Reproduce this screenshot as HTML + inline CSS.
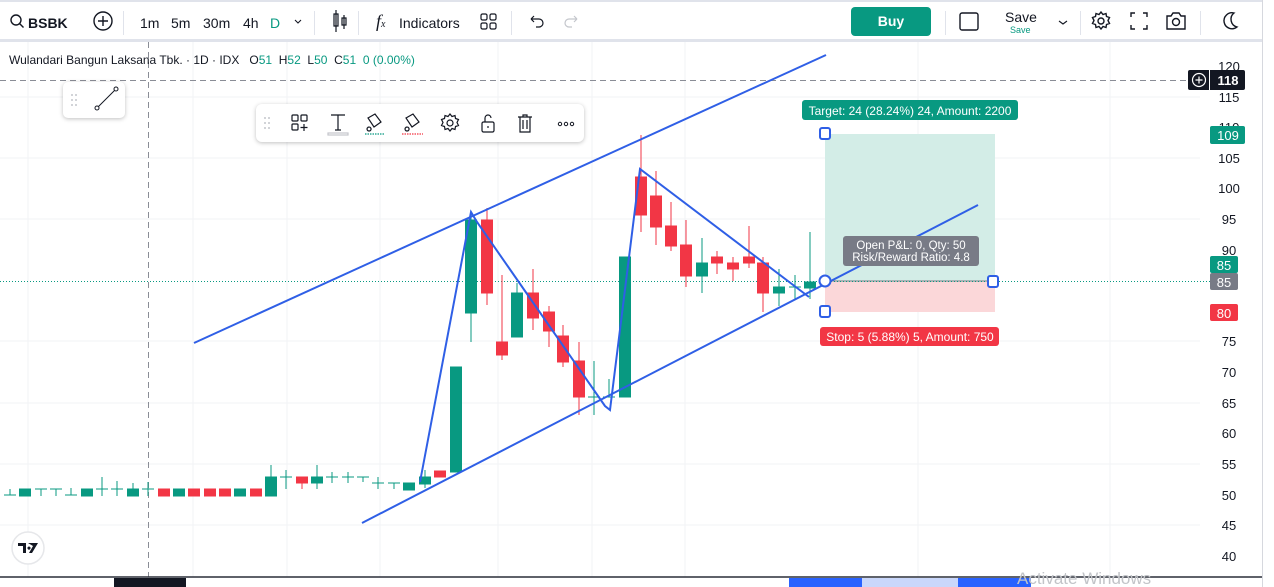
<!DOCTYPE html>
<html><head><meta charset="utf-8">
<style>
*{margin:0;padding:0;box-sizing:border-box}
body{width:1274px;height:587px;overflow:hidden;background:#fff;font-family:"Liberation Sans",sans-serif;color:#131722;position:relative}
.tb{position:absolute;left:0;top:0;width:1262px;height:42px;border-top:2px solid #e0e3eb;border-bottom:3px solid #e0e3eb;background:#fff}
.t{position:absolute;font-size:14px;top:13px}
.sep{position:absolute;top:9px;width:1px;height:24px;background:#e0e3eb}
svg{position:absolute;left:0;top:0}
</style></head><body>
<svg width="1274" height="587" viewBox="0 0 1274 587" font-family="Liberation Sans, sans-serif">
<!-- grid -->
<g stroke="#f2f3f6" stroke-width="1">
<line x1="0" y1="97" x2="1200" y2="97"/><line x1="0" y1="158" x2="1200" y2="158"/><line x1="0" y1="219" x2="1200" y2="219"/><line x1="0" y1="341" x2="1200" y2="341"/><line x1="0" y1="403" x2="1200" y2="403"/><line x1="0" y1="464" x2="1200" y2="464"/><line x1="0" y1="525" x2="1200" y2="525"/>
<line x1="28" y1="42" x2="28" y2="577"/><line x1="193" y1="42" x2="193" y2="577"/><line x1="287" y1="42" x2="287" y2="577"/><line x1="380" y1="42" x2="380" y2="577"/><line x1="498" y1="42" x2="498" y2="577"/><line x1="592" y1="42" x2="592" y2="577"/><line x1="685" y1="42" x2="685" y2="577"/><line x1="918" y1="42" x2="918" y2="577"/><line x1="1110" y1="42" x2="1110" y2="577"/>
</g>
<!-- right border -->
<line x1="1262.5" y1="0" x2="1262.5" y2="587" stroke="#d6d8de"/>
<!-- crosshair -->
<line x1="0" y1="80.5" x2="1188" y2="80.5" stroke="#8a8d96" stroke-dasharray="6,4"/>
<line x1="148.5" y1="42" x2="148.5" y2="577" stroke="#8a8d96" stroke-dasharray="6,4"/>
<!-- position tool -->
<rect x="825" y="134" width="170" height="147" fill="#d3ede7"/>
<rect x="825" y="281" width="170" height="31" fill="#fbd7d9"/>
<line x1="825" y1="281" x2="995" y2="281" stroke="#787b86"/>
<line x1="0" y1="281.5" x2="1210" y2="281.5" stroke="#089981" stroke-dasharray="1,2"/>
<!-- candles early -->
<g fill="#089981" stroke="#089981" stroke-width="1">
<line x1="10" y1="489" x2="10" y2="495"/><line x1="4" y1="495" x2="16" y2="495"/>
<rect x="19.5" y="489" width="11" height="7"/>
<line x1="41" y1="489" x2="41" y2="496"/><line x1="35" y1="489" x2="47" y2="489"/>
<line x1="56" y1="489" x2="56" y2="496"/><line x1="50" y1="489" x2="62" y2="489"/>
<line x1="71" y1="488" x2="71" y2="495"/><line x1="65" y1="495" x2="77" y2="495"/>
<rect x="81.5" y="489" width="11" height="7"/>
<line x1="102" y1="477" x2="102" y2="496"/><line x1="96" y1="489" x2="108" y2="489"/>
<line x1="117" y1="481" x2="117" y2="496"/><line x1="111" y1="489" x2="123" y2="489"/>
<rect x="127.5" y="489" width="11" height="7"/><line x1="133" y1="483" x2="133" y2="489"/>
<line x1="148" y1="482" x2="148" y2="496"/><line x1="142" y1="489" x2="154" y2="489"/>
<rect x="173.5" y="489" width="11" height="7"/>
<rect x="234.5" y="489" width="11" height="7"/>
<rect x="265.5" y="477" width="11" height="19"/><line x1="271" y1="465" x2="271" y2="477"/>
<line x1="286" y1="470" x2="286" y2="489"/><line x1="280" y1="477" x2="292" y2="477"/>
<rect x="311.5" y="477" width="11" height="6"/><line x1="317" y1="465" x2="317" y2="489"/>
<line x1="332" y1="472" x2="332" y2="483"/><line x1="326" y1="477" x2="338" y2="477"/>
<line x1="348" y1="472" x2="348" y2="483"/><line x1="342" y1="477" x2="354" y2="477"/>
<line x1="363" y1="477" x2="363" y2="482"/><line x1="357" y1="477" x2="369" y2="477"/>
<line x1="378" y1="477" x2="378" y2="489"/><line x1="372" y1="483" x2="384" y2="483"/>
<line x1="394" y1="483" x2="394" y2="489"/><line x1="388" y1="483" x2="400" y2="483"/>
<rect x="403.5" y="483" width="11" height="7"/>
<rect x="419.5" y="477" width="11" height="7"/><line x1="425" y1="470" x2="425" y2="488"/>
<rect x="450.5" y="367" width="11" height="105"/>
<rect x="465.5" y="220" width="11" height="93"/><line x1="471" y1="212" x2="471" y2="342"/>
<rect x="511.5" y="293" width="11" height="44"/><line x1="517" y1="283" x2="517" y2="337"/>
<line x1="594" y1="361" x2="594" y2="415"/><line x1="588" y1="397" x2="600" y2="397"/>
<line x1="609" y1="379" x2="609" y2="397"/><line x1="603" y1="397" x2="615" y2="397"/>
<rect x="619.5" y="257" width="11" height="140"/>
<rect x="696.5" y="263" width="11" height="13"/><line x1="702" y1="238" x2="702" y2="293"/>
<rect x="773.5" y="287" width="11" height="6"/><line x1="779" y1="269" x2="779" y2="306"/>
<line x1="795" y1="275" x2="795" y2="300"/><line x1="789" y1="287" x2="801" y2="287"/>
<rect x="804.5" y="282" width="11" height="6"/><line x1="810" y1="232" x2="810" y2="299"/>
</g>
<g fill="#f23645" stroke="#f23645" stroke-width="1">
<rect x="158.5" y="489" width="11" height="7"/>
<rect x="188.5" y="489" width="11" height="7"/>
<rect x="204.5" y="489" width="11" height="7"/>
<rect x="219.5" y="489" width="11" height="7"/>
<rect x="250.5" y="489" width="11" height="7"/>
<rect x="296.5" y="477" width="11" height="6"/><line x1="302" y1="483" x2="302" y2="489"/>
<rect x="434.5" y="471" width="11" height="6"/>
<rect x="481.5" y="220" width="11" height="73"/><line x1="487" y1="208" x2="487" y2="305"/>
<rect x="496.5" y="342" width="11" height="13"/><line x1="502" y1="275" x2="502" y2="360"/>
<rect x="527.5" y="293" width="11" height="25"/><line x1="533" y1="269" x2="533" y2="330"/>
<rect x="543.5" y="312" width="11" height="19"/><line x1="549" y1="306" x2="549" y2="347"/>
<rect x="557.5" y="336" width="11" height="26"/><line x1="563" y1="325" x2="563" y2="367"/>
<rect x="573.5" y="361" width="11" height="36"/><line x1="579" y1="342" x2="579" y2="415"/>
<rect x="635.5" y="177" width="11" height="38"/><line x1="641" y1="135" x2="641" y2="232"/>
<rect x="650.5" y="196" width="11" height="31"/><line x1="656" y1="171" x2="656" y2="245"/>
<rect x="665.5" y="226" width="11" height="20"/><line x1="671" y1="202" x2="671" y2="251"/>
<rect x="680.5" y="245" width="11" height="31"/><line x1="686" y1="220" x2="686" y2="287"/>
<rect x="711.5" y="257" width="11" height="6"/><line x1="717" y1="251" x2="717" y2="274"/>
<rect x="727.5" y="263" width="11" height="6"/><line x1="733" y1="257" x2="733" y2="281"/>
<rect x="743.5" y="257" width="11" height="6"/><line x1="749" y1="226" x2="749" y2="268"/>
<rect x="757.5" y="263" width="11" height="30"/><line x1="763" y1="257" x2="763" y2="312"/>
</g>
<!-- drawings -->
<g stroke="#2f5fe6" stroke-width="2" fill="none">
<line x1="194" y1="343" x2="826" y2="55"/>
<line x1="362" y1="523" x2="978" y2="205"/>
<polyline points="420,482 471,212 477,222 605,406 610,410 640,169 809,297"/>
</g>
<g stroke="#2f5fe6" stroke-width="2" fill="#fff">
<rect x="820" y="128" width="10" height="11" rx="2"/>
<rect x="820" y="306" width="10" height="11" rx="2"/>
<circle cx="825" cy="281" r="5.5"/>
<rect x="988" y="276" width="10" height="11" rx="2"/>
</g>
<!-- labels -->
<rect x="802" y="100" width="216" height="20" rx="3" fill="#089981"/>
<text x="910" y="115" font-size="12" fill="#fff" text-anchor="middle">Target: 24 (28.24%) 24, Amount: 2200</text>
<rect x="843" y="236" width="136" height="30" rx="3" fill="#787b86"/>
<text x="911" y="249" font-size="11.5" fill="#fff" text-anchor="middle">Open P&amp;L: 0, Qty: 50</text>
<text x="911" y="261" font-size="11.5" fill="#fff" text-anchor="middle">Risk/Reward Ratio: 4.8</text>
<rect x="820" y="327" width="179" height="19" rx="3" fill="#f23645"/>
<text x="910" y="341" font-size="12" fill="#fff" text-anchor="middle">Stop: 5 (5.88%) 5, Amount: 750</text>
<!-- price axis -->
<g font-size="13" fill="#131722" text-anchor="middle">
<text x="1229" y="71">120</text><text x="1229" y="102">115</text><text x="1229" y="132">110</text><text x="1229" y="163">105</text><text x="1229" y="193">100</text><text x="1229" y="224">95</text><text x="1229" y="255">90</text><text x="1229" y="346">75</text><text x="1229" y="377">70</text><text x="1229" y="408">65</text><text x="1229" y="438">60</text><text x="1229" y="469">55</text><text x="1229" y="500">50</text><text x="1229" y="530">45</text><text x="1229" y="561">40</text>
</g>
<rect x="1188" y="70" width="57" height="20" rx="2" fill="#131722"/>
<line x1="1209.5" y1="70" x2="1209.5" y2="90" stroke="#fff"/>
<circle cx="1199" cy="80" r="6.5" stroke="#fff" fill="none" stroke-width="1.2"/>
<path d="M1195.5 80h7M1199 76.5v7" stroke="#fff" stroke-width="1.2"/>
<text x="1228" y="85" font-size="13" fill="#fff" text-anchor="middle" font-weight="bold">118</text>
<rect x="1210" y="126" width="35" height="18" rx="2" fill="#089981"/><text x="1228" y="140" font-size="13" fill="#fff" text-anchor="middle">109</text>
<rect x="1210" y="256" width="28" height="17" rx="2" fill="#089981"/><text x="1224" y="270" font-size="13" fill="#fff" text-anchor="middle">85</text>
<rect x="1210" y="273" width="28" height="17" rx="2" fill="#787b86"/><text x="1224" y="287" font-size="13" fill="#fff" text-anchor="middle">85</text>
<rect x="1210" y="304" width="28" height="17" rx="2" fill="#f23645"/><text x="1224" y="318" font-size="13" fill="#fff" text-anchor="middle">80</text>
<!-- time axis -->
<line x1="0" y1="577" x2="1262" y2="577" stroke="#2a2e39" stroke-width="1.5"/>
<rect x="114" y="578" width="72" height="9" fill="#131722"/>
<rect x="789" y="578" width="73" height="9" fill="#2962ff"/>
<rect x="862" y="578" width="96" height="9" fill="#c9d7fb"/>
<rect x="958" y="578" width="73" height="9" fill="#2962ff"/>
<text x="1017" y="584" font-size="17" fill="#c2c4c8">Activate Windows</text>
<!-- TV logo -->
<circle cx="28" cy="548" r="16" fill="#fff" stroke="#e6e7ea" stroke-width="1.5"/>
<path d="M18 543h8v10h-3v-7h-5z M28 543h10l-6 10h-3l4-7z M29 546.5a1.6 1.6 0 1 0 0.01 0" fill="#131722"/>
</svg>
<!-- legend -->
<div style="position:absolute;left:9px;top:53px;font-size:12px;color:#131722;white-space:nowrap">Wulandari Bangun Laksana Tbk. · 1D · IDX &nbsp; O<span style="color:#089981">51</span>&nbsp; H<span style="color:#089981">52</span>&nbsp; L<span style="color:#089981">50</span>&nbsp; C<span style="color:#089981">51</span>&nbsp; <span style="color:#089981">0 (0.00%)</span></div>
<!-- line tool box -->
<div style="position:absolute;left:63px;top:82px;width:62px;height:36px;background:#fff;border-radius:5px;box-shadow:0 1px 4px rgba(0,0,0,.25)">
<svg width="62" height="36"><g fill="#c4c6cc"><circle cx="9" cy="13" r="1"/><circle cx="13" cy="13" r="1"/><circle cx="9" cy="18" r="1"/><circle cx="13" cy="18" r="1"/><circle cx="9" cy="23" r="1"/><circle cx="13" cy="23" r="1"/></g>
<line x1="35" y1="25" x2="52" y2="8" stroke="#131722"/><circle cx="34" cy="26" r="2" fill="#fff" stroke="#131722"/><circle cx="53" cy="7" r="2" fill="#fff" stroke="#131722"/></svg></div>
<!-- floating toolbar -->
<div style="position:absolute;left:256px;top:104px;width:328px;height:38px;background:#fff;border-radius:6px;box-shadow:0 1px 4px rgba(0,0,0,.25)">
<svg width="328" height="38" fill="none" stroke="#131722" stroke-width="1.2">
<g fill="#c4c6cc" stroke="none"><circle cx="9" cy="14" r="1"/><circle cx="13" cy="14" r="1"/><circle cx="9" cy="19" r="1"/><circle cx="13" cy="19" r="1"/><circle cx="9" cy="24" r="1"/><circle cx="13" cy="24" r="1"/></g>
<rect x="36" y="11" width="6" height="6" rx="1"/><rect x="45" y="11" width="6" height="6" rx="1"/><rect x="36" y="20" width="6" height="6" rx="1"/><path d="M48 20v7M44.5 23.5h7"/>
<path d="M75 11h14M82 11v15M79 26h6"/><rect x="72" y="29" width="20" height="2" stroke="#c4c6cc"/>
<path d="M112 14l7-4 6 8-7 5z M113 23a2 2 0 1 0 .1 0"/><path d="M109 30h20" stroke="#089981" stroke-dasharray="1.5,1"/>
<path d="M150 14l7-4 6 8-7 5z M151 23a2 2 0 1 0 .1 0"/><path d="M146 30h21" stroke="#f23645" stroke-dasharray="1.5,1"/>
<circle cx="194" cy="19" r="3"/><path d="M194 10l2 2.5 3-1 .5 3 3 1-1.5 3 1.5 3-3 1-.5 3-3-1-2 2.5-2-2.5-3 1-.5-3-3-1 1.5-3-1.5-3 3-1 .5-3 3 1z"/>
<rect x="226" y="18" width="12" height="10" rx="1.5"/><path d="M229 18v-4a3 3 0 0 1 6 0"/><path d="M232 22v2"/>
<path d="M262 13h14M267 13v-2h4v2M264 13v15h10v-15M267 16v9M271 16v9"/>
<g fill="#131722" stroke="none"><circle cx="304" cy="20" r="2.2"/><circle cx="310" cy="20" r="2.2"/><circle cx="316" cy="20" r="2.2"/></g><g fill="#fff" stroke="none"><circle cx="304" cy="20" r="1.2"/><circle cx="310" cy="20" r="1.2"/><circle cx="316" cy="20" r="1.2"/></g>
</svg></div>
<!-- top toolbar -->
<div class="tb">
<svg width="1262" height="40" fill="none" stroke="#131722" stroke-width="1.4">
<circle cx="16" cy="18" r="5"/><path d="M19.5 21.5l4 4"/>
<circle cx="103" cy="19" r="9"/><path d="M98 19h10M103 14v10"/>
<path d="M336 8v22M334 12h4v12h-4zM344 13v14M342 16h4v7h-4z" stroke-width="1.2"/>
<path d="M295 18l3 3 3-3" stroke-width="1.1"/>
<path d="M531 17h8a4 4 0 0 1 0 8h-3M531 17l3-3M531 17l3 3" stroke-width="1.2"/>
<path d="M577 17h-8a4 4 0 0 0 0 8h3M577 17l-3-3M577 17l-3 3" stroke="#c4c6cc" stroke-width="1.2"/>
<rect x="481" y="12" width="6" height="6" rx="1.5" stroke-width="1.2"/><rect x="490" y="12" width="6" height="6" rx="1.5" stroke-width="1.2"/><rect x="481" y="21" width="6" height="6" rx="1.5" stroke-width="1.2"/><rect x="490" y="21" width="6" height="6" rx="1.5" stroke-width="1.2"/>
<rect x="960" y="11" width="18" height="17" rx="2"/>
<path d="M1059 19l4 3 4-3" stroke-width="1.1"/>
<circle cx="1101" cy="19" r="3"/><path d="M1101 10l2 2.5 3-1 .5 3 3 1-1.5 3 1.5 3-3 1-.5 3-3-1-2 2.5-2-2.5-3 1-.5-3-3-1 1.5-3-1.5-3 3-1 .5-3 3 1z"/>
<path d="M1131 15v-4h4M1143 11h4v4M1147 23v4h-4M1135 27h-4v-4"/>
<path d="M1167 14h4l2-3h6l2 3h4v13h-18z"/><circle cx="1176" cy="20" r="3.5"/>
<path d="M1234 11a8 8 0 1 0 3 14a8 8 0 0 1 -3 -14z"/>
</svg>
<div class="t" style="left:28px;font-weight:bold">BSBK</div>
<div class="sep" style="left:123px"></div>
<div class="t" style="left:140px">1m</div><div class="t" style="left:171px">5m</div><div class="t" style="left:203px">30m</div><div class="t" style="left:243px">4h</div><div class="t" style="left:270px;color:#089981">D</div>
<div class="sep" style="left:314px"></div><div class="sep" style="left:358px"></div>
<div style="position:absolute;left:376px;top:9px;font-size:18px;font-family:'Liberation Serif',serif;font-style:italic">f<span style="font-size:10px">x</span></div>
<div class="t" style="left:399px">Indicators</div>
<div class="sep" style="left:511px"></div>
<div style="position:absolute;left:851px;top:5px;width:80px;height:29px;background:#089981;border-radius:4px;color:#fff;font-weight:bold;font-size:14px;text-align:center;line-height:29px">Buy</div>
<div class="sep" style="left:945px"></div>
<div style="position:absolute;left:1005px;top:7px;font-size:14px">Save</div>
<div style="position:absolute;left:1010px;top:23px;font-size:9px;color:#089981">Save</div>
<div class="sep" style="left:1080px"></div><div class="sep" style="left:1200px"></div>
</div>
</body></html>
